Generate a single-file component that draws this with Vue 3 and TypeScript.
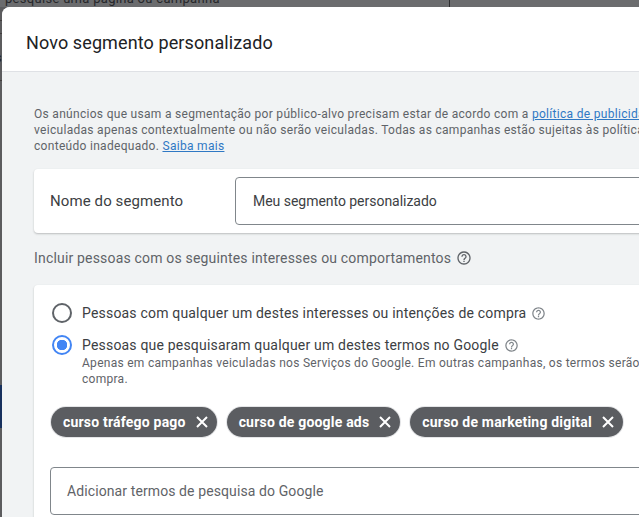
<script setup lang="ts">
const chips: string[] = ['curso tráfego pago', 'curso de google ads', 'curso de marketing digital']
</script>

<template>
  <div class="page">
    <div class="backdrop">
      <div class="back-top">
        <span class="back-text">pesquise uma página ou campanha</span>
        <span class="back-divider"></span>
      </div>
      <div class="back-side">
        <span class="back-line one"></span>
        <span class="back-line two"></span>
        <span class="back-s">s</span>
        <span class="back-line three"></span>
        <span class="back-blue"></span>
      </div>
    </div>
    <section class="dialog">
      <header class="head">Novo segmento personalizado</header>
      <div class="body">
        <p class="notice">
          <span class="nl">Os anúncios que usam a segmentação por público-alvo precisam estar de acordo com a <a href="#">política de publicidade</a></span>
          <span class="nl">veiculadas apenas contextualmente ou não serão veiculadas. Todas as campanhas estão sujeitas às políticas</span>
          <span class="nl">conteúdo inadequado. <a href="#">Saiba mais</a></span>
        </p>
        <div class="card name-card">
          <span class="name-label">Nome do segmento</span>
          <div class="field name-field">Meu segmento personalizado</div>
        </div>
        <div class="include">
          <span>Incluir pessoas com os seguintes interesses ou comportamentos</span>
          <svg class="help dark" viewBox="0 0 24 24" width="16" height="16"><path d="M11 18h2v-2h-2v2zm1-16C6.48 2 2 6.48 2 12s4.48 10 10 10 10-4.48 10-10S17.52 2 12 2zm0 18c-4.41 0-8-3.59-8-8s3.59-8 8-8 8 3.59 8 8-3.59 8-8 8zm0-14c-2.21 0-4 1.79-4 4h2c0-1.1.9-2 2-2s2 .9 2 2c0 2-3 1.75-3 5h2c0-2.25 3-2.5 3-5 0-2.21-1.79-4-4-4z"/></svg>
        </div>
        <div class="card options">
          <div class="radio-row first">
            <span class="radio"></span>
            <div class="radio-title">
              <span class="radio-label">Pessoas com qualquer um destes interesses ou intenções de compra</span>
              <svg class="help" viewBox="0 0 24 24" width="15" height="15"><path d="M11 18h2v-2h-2v2zm1-16C6.48 2 2 6.48 2 12s4.48 10 10 10 10-4.48 10-10S17.52 2 12 2zm0 18c-4.41 0-8-3.59-8-8s3.59-8 8-8 8 3.59 8 8-3.59 8-8 8zm0-14c-2.21 0-4 1.79-4 4h2c0-1.1.9-2 2-2s2 .9 2 2c0 2-3 1.75-3 5h2c0-2.25 3-2.5 3-5 0-2.21-1.79-4-4-4z"/></svg>
            </div>
          </div>
          <div class="radio-row second">
            <span class="radio on"></span>
            <div class="radio-text">
              <div class="radio-title">
                <span class="radio-label">Pessoas que pesquisaram qualquer um destes termos no Google</span>
                <svg class="help" viewBox="0 0 24 24" width="15" height="15"><path d="M11 18h2v-2h-2v2zm1-16C6.48 2 2 6.48 2 12s4.48 10 10 10 10-4.48 10-10S17.52 2 12 2zm0 18c-4.41 0-8-3.59-8-8s3.59-8 8-8 8 3.59 8 8-3.59 8-8 8zm0-14c-2.21 0-4 1.79-4 4h2c0-1.1.9-2 2-2s2 .9 2 2c0 2-3 1.75-3 5h2c0-2.25 3-2.5 3-5 0-2.21-1.79-4-4-4z"/></svg>
              </div>
              <p class="hint">Apenas em campanhas veiculadas nos Serviços do Google. Em outras campanhas, os termos serão</p>
              <p class="hint">compra.</p>
            </div>
          </div>
          <div class="chips">
            <span v-for="c in chips" :key="c" class="chip">
              {{ c }}
              <svg viewBox="0 0 12 12" width="12" height="12"><path d="M1 1l10 10M11 1L1 11" stroke="#fff" stroke-width="2" fill="none"/></svg>
            </span>
          </div>
          <div class="field terms-field">Adicionar termos de pesquisa do Google</div>
        </div>
      </div>
    </section>
  </div>
</template>

<style>
html, body { margin: 0; overflow: hidden; }
</style>

<style scoped>
.page {
  width: 639px;
  height: 517px;
  position: relative;
  overflow: hidden;
  background: #5c5c5e;
  font-family: Roboto, "Liberation Sans", sans-serif;
}
.backdrop { position: absolute; inset: 0; }
.back-top { height: 7px; position: relative; background: #6b6c6e; overflow: hidden; }
.back-text { position: absolute; left: 5px; top: -9px; font-size: 13px; line-height: 15px; letter-spacing: .3px; color: #26272a; white-space: nowrap; }
.back-divider { position: absolute; left: 449px; top: 0; width: 1px; height: 7px; background: #2e2e30; }
.back-side { position: absolute; left: 0; top: 7px; bottom: 0; width: 2px; overflow: hidden; }
.back-line { position: absolute; left: 0; width: 2px; height: 1px; background: #413d3d; }
.one { top: 13px; }
.two { top: 26px; }
.three { top: 73px; }
.back-s { position: absolute; left: -5px; top: 43px; font-size: 13px; color: #222; }
.back-blue { position: absolute; left: 0; top: 378px; width: 2px; height: 43px; background: #17305d; }
.dialog {
  position: absolute;
  left: 2px;
  top: 7px;
  width: 700px;
  height: 560px;
  background: #f1f3f4;
  border-radius: 8px 0 0 0;
  overflow: hidden;
}
.head {
  height: 65px;
  box-sizing: border-box;
  padding: 24px 0 0 24px;
  background: #fff;
  border-bottom: 1px solid #dfe1e5;
  color: #202124;
  font-size: 18px;
  line-height: 24px;
  letter-spacing: .11px;
}
.body { padding: 0 0 0 32px; }
.notice {
  margin: 0;
  padding-top: 34px;
  font-size: 12px;
  line-height: 16px;
  letter-spacing: .3px;
  color: #5f6368;
}
.nl { display: block; white-space: nowrap; }
a { color: #2f78c4; text-decoration: underline; }
.card {
  background: #fff;
  border-radius: 4px;
  box-shadow: 0 1px 2px rgba(60,64,67,.3);
}
.name-card {
  display: flex;
  align-items: center;
  height: 64px;
  margin-top: 15px;
  padding-left: 16px;
}
.name-label { width: 185px; flex: none; font-size: 15px; color: #3c4043; letter-spacing: .1px; }
.field {
  box-sizing: border-box;
  border: 1px solid #80868b;
  border-radius: 4px;
  height: 48px;
  display: flex;
  align-items: center;
  padding-left: 17px;
  font-size: 14px;
  color: #3c4043;
}
.name-field { width: 500px; letter-spacing: -.03px; }
.include {
  display: flex;
  align-items: center;
  gap: 5px;
  margin-top: 15px;
  height: 20px;
  font-size: 14px;
  color: #5f6368;
  letter-spacing: .18px;
}
.help { fill: #80868b; flex: none; }
.help.dark { fill: #5f6368; }
.options { margin-top: 17px; padding: 18px 0 0 18px; height: 300px; }
.radio-row { display: flex; align-items: center; gap: 10px; }
.radio-row.first { height: 20px; }
.radio-row.second { align-items: flex-start; margin-top: 12px; }
.radio {
  box-sizing: border-box;
  flex: none;
  width: 20px;
  height: 20px;
  border: 2px solid #5f6368;
  border-radius: 50%;
}
.radio.on {
  border-color: #4285f4;
  background: radial-gradient(circle, #4285f4 0 5px, #fff 5.5px);
}
.radio-label { font-size: 14px; line-height: 20px; color: #3c4043; letter-spacing: .19px; white-space: nowrap; }
.radio-title { display: flex; align-items: center; gap: 5px; height: 20px; }
.radio-text { min-width: 0; }
.hint { margin: 0; font-size: 12px; line-height: 16px; color: #5f6368; letter-spacing: .28px; white-space: nowrap; }
.chips { display: flex; gap: 10px; margin-top: 20px; margin-left: -1px; }
.chip {
  display: inline-flex;
  align-items: center;
  gap: 10px;
  height: 30px;
  padding: 0 9px 0 12px;
  border-radius: 15px;
  background: #5b5d61;
  color: #fff;
  font-size: 14px;
  font-weight: 700;
  letter-spacing: .2px;
  white-space: nowrap;
  box-shadow: 0 0 0 1px #e4e5e7;
}
.terms-field { width: 640px; margin-top: 30px; margin-left: -2px; padding-left: 16px; color: #5f6368; letter-spacing: .1px; }
</style>
